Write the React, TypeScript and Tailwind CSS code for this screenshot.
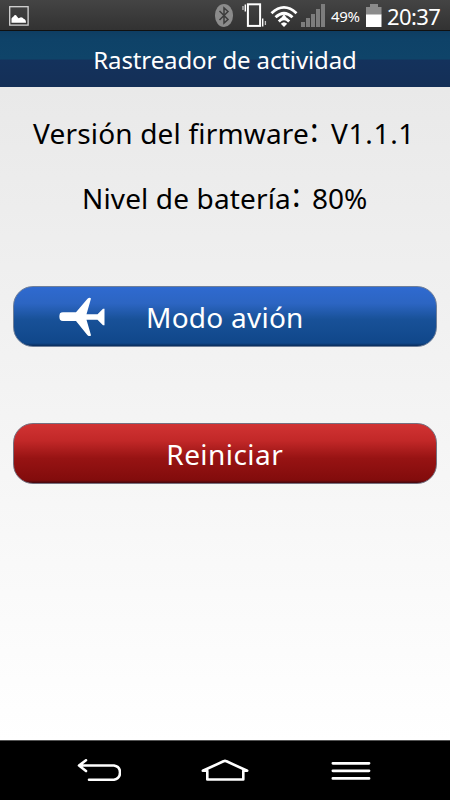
const StatusBar = () => (
  <div className="h-[31px] flex items-start bg-linear-to-b from-[#444444] to-[#323232] border-b border-[#101010] text-white">
    <svg className="ml-[9px] mt-[6px] w-5 h-5" viewBox="0 0 20 20" fill="none">
      <rect x="0.7" y="0.7" width="18.4" height="18.4" stroke="#d4d4d4" strokeWidth="1.3" />
      <path d="M2.5 16.7V12.5Q3.5 10.8 4.5 10.5L5.5 9.2Q7 8.8 8 10.5L9.5 12.2L12 11.2Q14 11.2 14.6 12.8Q17 13.3 17 16.7Z" fill="white" />
    </svg>
    <svg className="ml-[186px] mt-[4px] w-[18px] h-[23px]" viewBox="0 0 18 23" fill="none">
      <rect width="18" height="23" rx="9" ry="11" fill="#8b8b8b" />
      <path d="M4.5 7L13 15.5L9 19V4L13 7.5L4.5 16" stroke="#3c3c3c" strokeWidth="1.5" />
    </svg>
    <svg className="ml-[9px] mt-[3px] w-[25px] h-[25px]" viewBox="0 0 25 25" fill="none" stroke="white">
      <rect x="5.9" y="1.3" width="12.2" height="21.6" strokeWidth="2" />
      <path d="M3.3 1.5V8.5M20.7 15.5V23.5" strokeWidth="1.4" />
      <path d="M1 3V7M23.4 18V22" stroke="#c4c4c4" strokeWidth="1.3" />
    </svg>
    <svg className="ml-[3px] mt-[5px] w-[28px] h-[23px]" viewBox="0 0 28 23" fill="none" stroke="white" strokeWidth="2.8">
      <path d="M1.5 8.2Q14 -3.5 26.5 8.2" />
      <path d="M5.5 12.3Q14 4 22.5 12.3" />
      <path d="M8.8 16.5Q14 11 19.2 16.5" />
      <path d="M14 22L10.8 18.8Q14 15.8 17.2 18.8Z" fill="white" stroke="none" />
      <path d="M14 9L10 14.8H18Z" fill="white" stroke="none" />
    </svg>
    <svg className="ml-[3px] mt-[4px] w-[25px] h-[23px]" viewBox="0 0 25 23" fill="#7d7d7d">
      <path d="M0 18H4V23H0ZM5 14H9V23H5ZM10 10H14V23H10ZM15 5H19V23H15ZM20 0H24V23H20Z" />
    </svg>
    <span className="ml-[5px] mt-[6px] w-[35px] text-[15px] leading-5 tracking-[-0.3px] whitespace-nowrap">49%</span>
    <svg className="mt-[4px] w-4 h-[23px]" viewBox="0 0 16 23">
      <path d="M4 0H12V3H15.5V11H0V3H4Z" fill="#8b8b8b" />
      <path d="M0 10.5H15.5V23H0Z" fill="white" />
    </svg>
    <span className="ml-[5px] mt-[2px] text-[22px] leading-7 tracking-[-0.6px] whitespace-nowrap">20:37</span>
  </div>
);

const Header = () => (
  <header className="h-14 flex justify-center bg-[linear-gradient(to_bottom,#0e3d62_0,#0e4268_8px,#0f4469_28px,#14325c_29px,#142f57_100%)]">
    <h1 className="mt-[11px] text-[24px] leading-9 tracking-[-0.12px] text-white whitespace-nowrap">Rastreador de actividad</h1>
  </header>
);

const AirplaneIcon = () => (
  <svg className="w-[46px] h-10" viewBox="0 0 46 40" fill="white">
    <path d="M1 16.2Q2 15.2 4 15.2H17L28.5 1.8Q30.5 0 32 1.5L27.5 17.2H38.5L44 11.7H45.5V28.3H44L38.5 22.8H27.5L32 38.2Q31 40 28.5 38.2L17 24H4Q2 24 1 22.8Q-0.3 19.5 1 16.2Z" />
  </svg>
);

const NavBar = () => (
  <nav className="h-[60px] flex items-start bg-black border-t border-[#555555]">
    <svg className="ml-[77px] mt-[18px] w-11 h-6" viewBox="0 0 44 24" fill="none" stroke="white" strokeWidth="2.6" strokeLinecap="round" strokeLinejoin="round">
      <path d="M9 1.3L2 6.5L9 12M2 6.5H37Q43 7.5 43 13.5Q43 19.5 37 20.8H12" />
    </svg>
    <svg className="ml-[80px] mt-[18px] w-12 h-6" viewBox="0 0 48 24" fill="none" stroke="white" strokeWidth="2.6" strokeLinecap="round" strokeLinejoin="round">
      <path d="M1.8 11.8L22.5 2.3Q24 1.5 25.5 2.3L46.2 11.8H42.3V20.5H6.3V11.8Z" />
    </svg>
    <svg className="ml-[82px] mt-[19px] w-10 h-6" viewBox="0 0 40 24" fill="none" stroke="white" strokeWidth="2.8" strokeLinecap="round">
      <path d="M1.9 3.3H38M1.9 10.8H38M1.9 18.4H38" />
    </svg>
  </nav>
);

// The colon is taller than the font's own and centred on the capitals.
const Colon = () => <span className="relative -top-[2px] ml-px text-[32px] leading-none">:</span>;

export default function App() {
  return (
    <div className="w-[450px] h-[800px] flex flex-col overflow-hidden font-['Noto_Sans',sans-serif]">
      <StatusBar />
      <Header />
      <main className="flex-1 flex flex-col px-[13px] bg-linear-to-b from-[#e9e9e9] to-white text-black">
        <p className="mt-[26px] ml-5 h-10 flex text-[28px] leading-10 whitespace-nowrap">
          <span className="w-[298px] tracking-[0.18px]">Versión del firmware<Colon /></span>
          <span className="tracking-[0.7px]">V1.1.1</span>
        </p>
        <p className="mt-[25px] ml-[69px] h-10 flex text-[28px] leading-10 whitespace-nowrap">
          <span className="w-[230px] tracking-[0.14px]">Nivel de batería<Colon /></span>
          <span>80%</span>
        </p>
        <button className="mt-[68px] h-[61px] w-[423.5px] flex items-center rounded-[20px] border border-[#6f7f99] pl-[45px] text-white text-[28px] bg-[linear-gradient(to_bottom,#2f6ad0_0%,#2c65c2_28%,#185198_55%,#10478a_95%,#092c5b_100%)]">
          <AirplaneIcon />
          <span className="ml-[41px] tracking-[0.25px] whitespace-nowrap">Modo avión</span>
        </button>
        <button className="mt-[76px] h-[61px] w-[423.5px] flex items-center justify-center rounded-[20px] border border-[#76707f] text-white text-[28px] bg-[linear-gradient(to_bottom,#d13333_0%,#c22828_28%,#971313_58%,#820c0c_95%,#430810_100%)]">
          <span className="pt-px tracking-[0.45px] whitespace-nowrap">Reiniciar</span>
        </button>
      </main>
      <NavBar />
    </div>
  );
}
